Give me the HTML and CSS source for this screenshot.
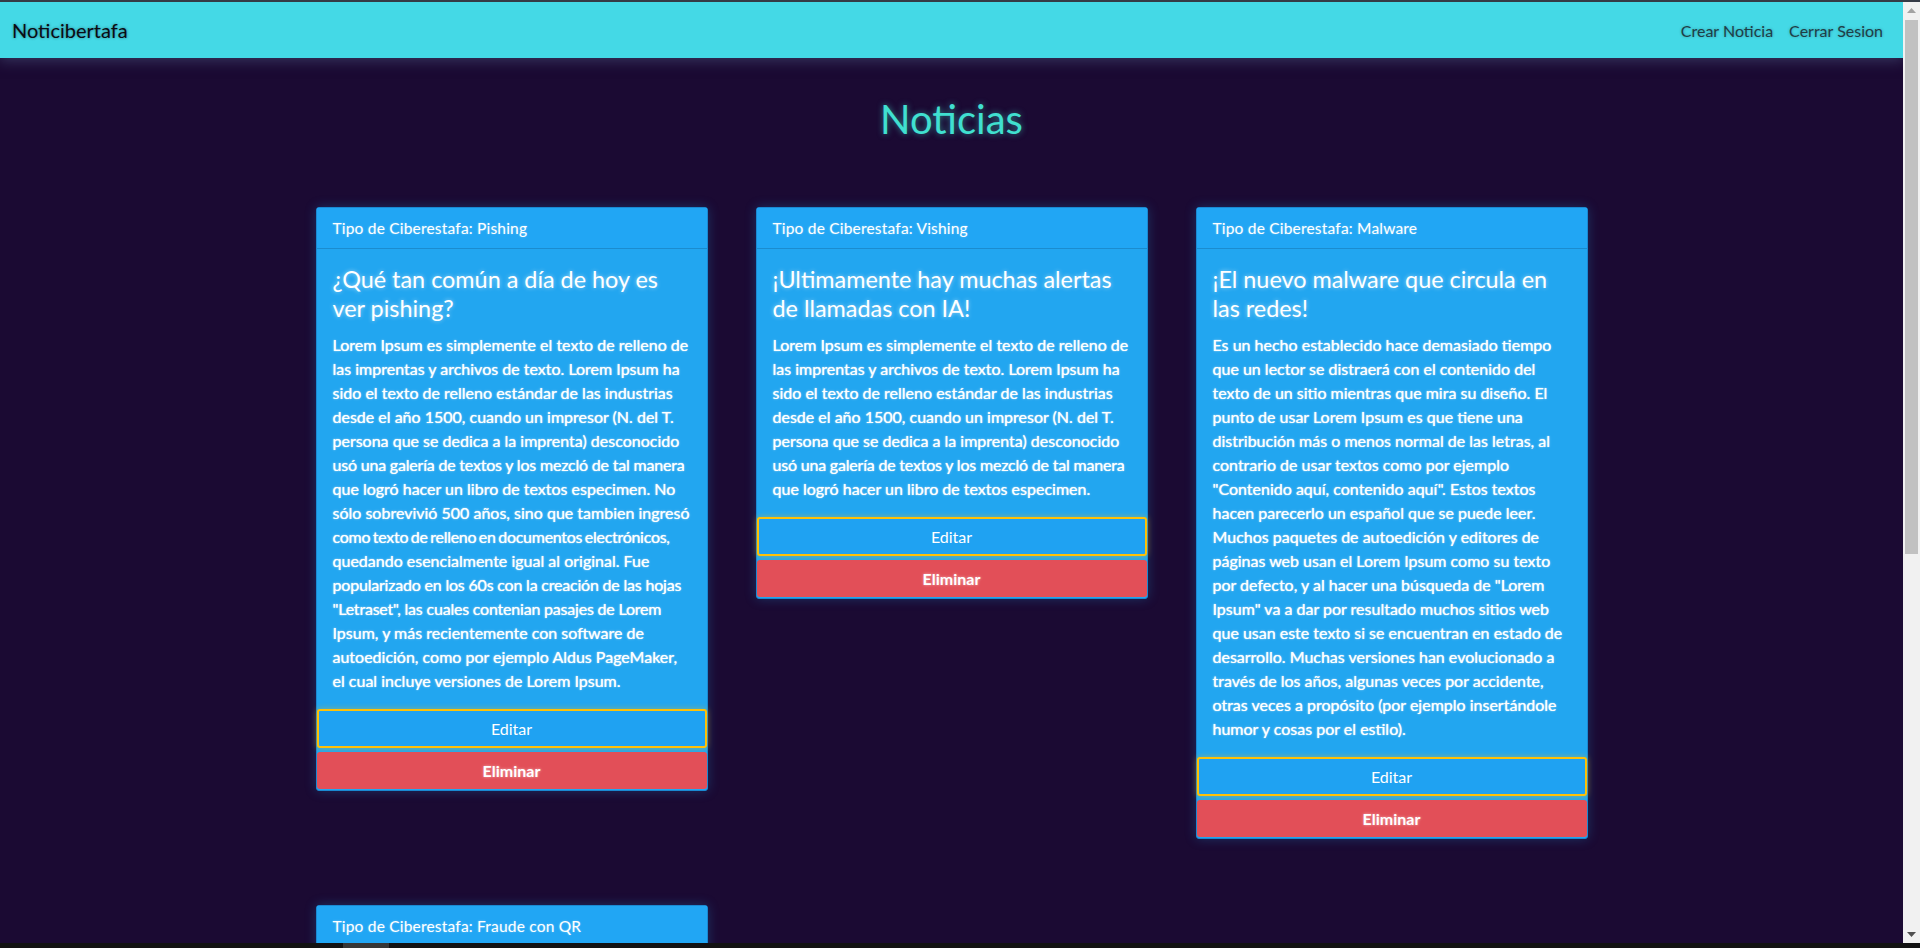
FILE: index.html
```html
<!DOCTYPE html>
<html lang="es">
<head>
<meta charset="utf-8">
<title>Noticibertafa</title>
<link rel="stylesheet" href="styles.css">
</head>
<body>
<div class="frame-top"></div>
<div class="viewport">
  <div class="page">
    <nav class="navbar">
      <a class="brand" href="#">Noticibertafa</a>
      <div class="nav-links">
        <a class="nav-link" href="#">Crear Noticia</a>
        <a class="nav-link" href="#">Cerrar Sesion</a>
      </div>
    </nav>
    <main class="main">
      <h1 class="page-title">Noticias</h1>
      <div class="cards">
        <article class="card">
          <div class="card-header">Tipo de Ciberestafa: Pishing</div>
          <div class="card-body">
            <h4 class="card-title">¿Qué tan común a día de hoy es ver pishing?</h4>
            <p class="card-text">Lorem Ipsum es simplemente el texto de relleno de las imprentas y archivos de texto. Lorem Ipsum ha sido el texto de relleno estándar de las industrias desde el año 1500, cuando un impresor (N. del T. persona que se dedica a la imprenta) desconocido <span class="fit">usó una galería de textos y los mezcló de tal manera</span> que logró hacer un libro de textos especimen. No sólo sobrevivió 500 años, sino que tambien ingresó <span class="fit-more">como texto de relleno en documentos electrónicos,</span> quedando esencialmente igual al original. Fue <span class="fit">popularizado en los 60s con la creación de las hojas</span> <span class="fit">"Letraset", las cuales contenian pasajes de Lorem</span> Ipsum, y más recientemente con software de autoedición, como por ejemplo Aldus PageMaker, el cual incluye versiones de Lorem Ipsum.</p>
          </div>
          <button class="btn btn-edit" type="button">Editar</button>
          <button class="btn btn-delete" type="button">Eliminar</button>
        </article>
        <article class="card">
          <div class="card-header">Tipo de Ciberestafa: Vishing</div>
          <div class="card-body">
            <h4 class="card-title">¡Ultimamente hay muchas alertas de llamadas con IA!</h4>
            <p class="card-text">Lorem Ipsum es simplemente el texto de relleno de las imprentas y archivos de texto. Lorem Ipsum ha sido el texto de relleno estándar de las industrias desde el año 1500, cuando un impresor (N. del T. persona que se dedica a la imprenta) desconocido <span class="fit">usó una galería de textos y los mezcló de tal manera</span> que logró hacer un libro de textos especimen.</p>
          </div>
          <button class="btn btn-edit" type="button">Editar</button>
          <button class="btn btn-delete" type="button">Eliminar</button>
        </article>
        <article class="card">
          <div class="card-header">Tipo de Ciberestafa: Malware</div>
          <div class="card-body">
            <h4 class="card-title">¡El nuevo malware que circula en las redes!</h4>
            <p class="card-text">Es un hecho establecido hace demasiado tiempo que un lector se distraerá con el contenido del texto de un sitio mientras que mira su diseño. El punto de usar Lorem Ipsum es que tiene una distribución más o menos normal de las letras, al contrario de usar textos como por ejemplo "Contenido aquí, contenido aquí". Estos textos hacen parecerlo un español que se puede leer. Muchos paquetes de autoedición y editores de páginas web usan el Lorem Ipsum como su texto por defecto, y al hacer una búsqueda de "Lorem Ipsum" va a dar por resultado muchos sitios web que usan este texto si se encuentran en estado de desarrollo. Muchas versiones han evolucionado a través de los años, algunas veces por accidente, otras veces a propósito (por ejemplo insertándole humor y cosas por el estilo).</p>
          </div>
          <button class="btn btn-edit" type="button">Editar</button>
          <button class="btn btn-delete" type="button">Eliminar</button>
        </article>
        <article class="card">
          <div class="card-header">Tipo de Ciberestafa: Fraude con QR</div>
          <div class="card-body">
            <h4 class="card-title">¡Cuidado con los códigos QR falsos en la calle!</h4>
            <p class="card-text">Lorem Ipsum es simplemente el texto de relleno de las imprentas y archivos de texto. Lorem Ipsum ha sido el texto de relleno estándar de las industrias desde el año 1500, cuando un impresor (N. del T. persona que se dedica a la imprenta) desconocido <span class="fit">usó una galería de textos y los mezcló de tal manera</span> que logró hacer un libro de textos especimen. No sólo sobrevivió 500 años, sino que tambien ingresó como texto de relleno en documentos electrónicos, quedando esencialmente igual al original.</p>
          </div>
          <button class="btn btn-edit" type="button">Editar</button>
          <button class="btn btn-delete" type="button">Eliminar</button>
        </article>
      </div>
    </main>
  </div>
  <div class="scrollbar" aria-hidden="true">
    <div class="sb-arrow">
      <svg width="9" height="5" viewBox="0 0 9 5"><polygon points="0,5 9,5 4.5,0" fill="#a3a3a3"/></svg>
    </div>
    <div class="sb-track">
      <div class="sb-thumb"></div>
    </div>
    <div class="sb-arrow">
      <svg width="9" height="5" viewBox="0 0 9 5"><polygon points="0,0 9,0 4.5,5" fill="#505050"/></svg>
    </div>
  </div>
</div>
<div class="frame-bottom"><span class="task-item"></span></div>
</body>
</html>
```
FILE: styles.css
```css
html, body {
  margin: 0;
  height: 100%;
  overflow: hidden;
  background: #1b0a33;
  font-family: Lato, "Noto Sans", sans-serif;
}

body {
  display: flex;
  flex-direction: column;
}

.frame-top {
  height: 2px;
  flex: none;
  background: #353b46;
}

.frame-bottom {
  height: 5px;
  flex: none;
  background: #121212;
  display: flex;
  padding-left: 343px;
}

.task-item {
  width: 46px;
  height: 5px;
  background: #363636;
}

.viewport {
  flex: 1;
  min-height: 0;
  display: flex;
  background: #1b0a33;
}

.page {
  flex: 1;
  min-width: 0;
  overflow: hidden;
}

/* scrollbar drawn as a plain column */
.scrollbar {
  width: 17px;
  flex: none;
  display: flex;
  flex-direction: column;
  background: #f1f1f1;
}

.sb-arrow {
  height: 17px;
  flex: none;
  display: flex;
  align-items: center;
  justify-content: center;
}

.sb-track {
  flex: 1;
  padding: 1px 2px 0;
}

.sb-thumb {
  height: 534px;
  background: #c1c1c1;
}

.navbar {
  height: 56px;
  background: #44d9e6;
  display: flex;
  align-items: center;
  justify-content: space-between;
  padding: 0 12px;
  box-shadow: 0 3px 12px rgba(70, 80, 120, 0.6);
  position: relative;
}

.brand {
  font-size: 20px;
  color: #0b0b14;
  text-decoration: none;
  text-shadow: 0 0 3px rgba(0, 0, 0, 0.45);
}

.nav-links {
  display: flex;
}

.nav-link {
  padding: 0 8px;
  font-size: 16px;
  color: #1f3e47;
  text-decoration: none;
  text-shadow: 0 0 3px rgba(0, 0, 0, 0.3);
}

.main {
  padding: 37px 0 110px;
}

.page-title {
  margin: 0 0 64px;
  text-align: center;
  font-size: 40px;
  font-weight: 400;
  line-height: 1.2;
  color: #40e0d0;
  text-shadow: 0 0 6px rgba(64, 224, 208, 0.55);
}

.cards {
  display: grid;
  grid-template-columns: repeat(3, 392px);
  column-gap: 48px;
  row-gap: 66px;
  justify-content: center;
  align-items: start;
}

.card {
  background: #22a6f0;
  border: 1px solid #1a89d2;
  border-radius: 3px;
  box-shadow: 0 0 12px rgba(34, 166, 240, 0.25);
  display: flex;
  flex-direction: column;
  color: #fff;
}

.card-header {
  padding: 8px 16px;
  line-height: 24px;
  font-size: 15.5px;
  letter-spacing: 0.2px;
  background: #21a6f4;
  border-bottom: 1px solid #1b8ccf;
  text-shadow: 0 0 2px rgba(255, 255, 255, 0.4);
}

.card-body {
  padding: 16px;
}

.card-title {
  margin: 0 0 10px;
  font-size: 23.4px;
  font-weight: 400;
  line-height: 28.8px;
  text-shadow: 0 0 4px rgba(255, 255, 255, 0.55);
}

.card-text {
  margin: 0;
  font-size: 16px;
  font-weight: 400;
  line-height: 24px;
  text-shadow: 0 0 1px rgba(255, 255, 255, 0.9), 0 0 3px rgba(255, 255, 255, 0.35);
}

.fit {
  letter-spacing: -0.2px;
}

.fit-more {
  letter-spacing: -0.28px;
  word-spacing: -1.2px;
}

.btn {
  display: block;
  width: 100%;
  font-family: Lato, "Noto Sans", sans-serif;
  font-size: 16px;
  color: #fff;
  border-radius: 3px;
  cursor: pointer;
}

.btn-edit {
  height: 39px;
  background: #1fa2f2;
  border: 2px solid #ffc107;
  box-shadow: 0 0 6px rgba(255, 193, 7, 0.45);
}

.btn-delete {
  height: 37px;
  margin-top: 4px;
  margin-bottom: 1px;
  background: #e24f58;
  border: 0;
  font-weight: 700;
  text-shadow: 0 0 3px rgba(255, 255, 255, 0.55);
}
```
